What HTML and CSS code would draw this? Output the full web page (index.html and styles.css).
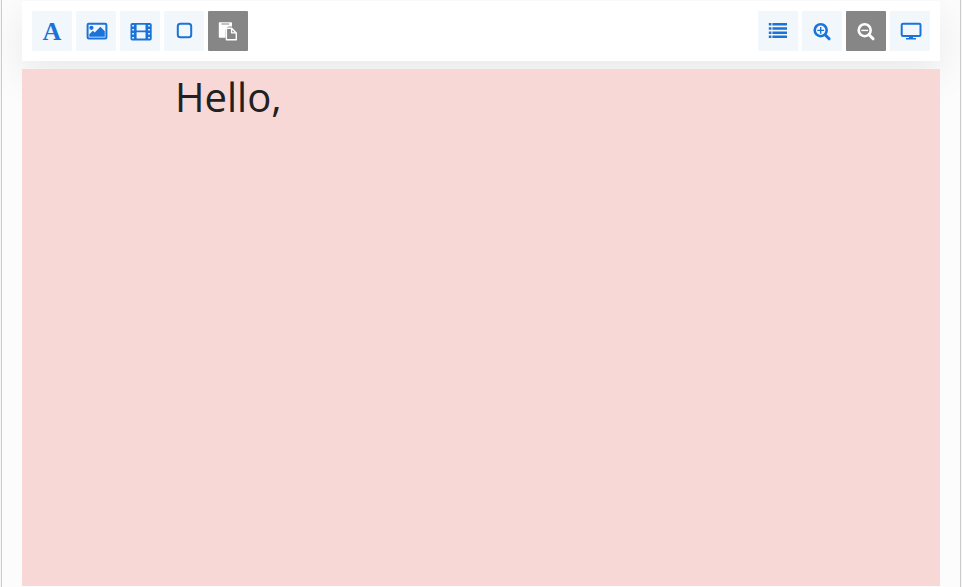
FILE: index.html
```html
<!DOCTYPE html>
<html lang="en">
<head>
<meta charset="utf-8">
<title>Slide editor</title>
<link rel="stylesheet" href="styles.css">
</head>
<body>
<main class="editor">
  <header class="toolbar">
    <div class="group">
      <button class="tool letter" aria-label="Text">A</button>
      <button class="tool" aria-label="Image"><svg viewBox="0 0 40 40"><rect class="line" x="11.6" y="12.8" width="18.8" height="14.6" rx="1.2"/><circle cx="15.4" cy="16.8" r="2.1"/><path d="M13.3 25.8v-2.5l3.6-3.6 1.8 1.8 5.7-5.7 4.4 4.4v5.6z"/></svg></button>
      <button class="tool" aria-label="Video"><svg viewBox="0 0 40 40"><path fill-rule="evenodd" d="M12.3 12h17.6a1.8 1.8 0 0 1 1.8 1.8v15a1.8 1.8 0 0 1-1.8 1.8H12.3a1.8 1.8 0 0 1-1.8-1.8v-15a1.8 1.8 0 0 1 1.8-1.8zM12.2 14v1.7h1.8V14zm0 4.2v1.7h1.8v-1.7zm0 4.3v1.7h1.8v-1.7zm0 4.3v1.7h1.8v-1.7zM16.6 13.9v6.1h8.9v-6.1zm0 7.9v6.6h8.9v-6.6zM28.1 14v1.7h1.8V14zm0 4.2v1.7h1.8v-1.7zm0 4.3v1.7h1.8v-1.7zm0 4.3v1.7h1.8v-1.7z" transform="translate(0 .8) scale(1 .94)"/></svg></button>
      <button class="tool" aria-label="Shape"><svg viewBox="0 0 40 40"><rect class="line" x="13.8" y="12.8" width="13.4" height="13.4" rx="2.5"/></svg></button>
      <button class="tool disabled" aria-label="Paste"><svg viewBox="0 0 40 40"><path fill-rule="evenodd" d="M11.8 11.2h11.2c.6 0 1 .4 1 1v3.2h-2.4c-2.2 0-4 1.8-4 4v7.4h-5.8c-.6 0-1-.4-1-1V12.2c0-.6.4-1 1-1zm1.6 1.2v1h7.8v-1z"/><path class="page" d="M18.4 17.2h5.2l4.7 4.7v6.9h-9.9zM23.6 17.2v4.7h4.7"/></svg></button>
    </div>
    <div class="group">
      <button class="tool" aria-label="List"><svg viewBox="0 0 40 40"><path d="M10.8 12h2.6v2.6h-2.6zm3.6 0h14.6v2.6H14.4zM10.8 16.2h2.6v2.6h-2.6zm3.6 0h14.6v2.6H14.4zM10.8 20.4h2.6V23h-2.6zm3.6 0h14.6V23H14.4zM10.8 24.6h2.6v2.5h-2.6zm3.6 0h14.6v2.5H14.4z"/></svg></button>
      <button class="tool" aria-label="Zoom in"><svg viewBox="0 0 40 40"><circle class="lens" cx="18.7" cy="19.2" r="6"/><path class="handle" d="M23.3 24l3.8 3.8"/><path d="M15.3 18.7h2.7V16h1.4v2.7h2.7v1.4h-2.7v2.7H18v-2.7h-2.7z"/></svg></button>
      <button class="tool disabled" aria-label="Zoom out"><svg viewBox="0 0 40 40"><circle class="lens" cx="18.7" cy="19.2" r="6"/><path class="handle" d="M23.3 24l3.8 3.8"/><path d="M15.3 18.7h6.8v1.4h-6.8z"/></svg></button>
      <button class="tool" aria-label="Present"><svg viewBox="0 0 40 40"><rect class="line" x="11.7" y="12.8" width="18.8" height="12.3" rx="1.3"/><path d="M19 25.5h4v1.5h3v1.6H16V27h3z"/></svg></button>
    </div>
  </header>
  <section class="slide"><p class="greeting">Hello,</p></section>
</main>
</body>
</html>
```
FILE: styles.css
```css
* { box-sizing: border-box; }
html { height: 100%; overflow: hidden; background: #f6f6f6; }
body { margin: 0; height: 100%; font-family: "Open Sans", "Noto Sans", sans-serif; }
.editor {
  height: 587px;
  margin: 0 1px;
  padding: 1px 20px;
  border: solid #ccc;
  border-width: 0 1px;
  background: #fcfcfc;
  overflow: hidden;
}
.toolbar {
  display: flex;
  justify-content: space-between;
  height: 60px;
  margin-bottom: 8px;
  padding: 10px;
  background: #fff;
  box-shadow: 0 14px 40px rgba(0, 0, 0, .08);
}
.group { display: flex; gap: 4px; }
.tool {
  width: 40px;
  height: 40px;
  padding: 0;
  border: 0;
  border-radius: 1px;
  background: #f2f7fc;
  color: #1a73d9;
}
.tool svg { display: block; width: 40px; height: 40px; fill: currentColor; }
.tool.disabled { background: #868686; color: #fff; }
.letter { padding-top: 1px; font: bold 26px/39px "Liberation Serif", serif; }
.tool .line { fill: none; stroke: currentColor; stroke-width: 2; }
.tool .page { fill: #868686; stroke: currentColor; stroke-width: 1.4; stroke-linejoin: round; }
.tool .lens { fill: none; stroke: currentColor; stroke-width: 2.6; }
.tool .handle { stroke: currentColor; stroke-width: 3; stroke-linecap: round; }
.slide { position: relative; height: 517px; padding-left: 153px; background: #f7d8d6; }
.greeting { margin: 0; font-size: 40px; line-height: 56px; color: #212121; }
```
